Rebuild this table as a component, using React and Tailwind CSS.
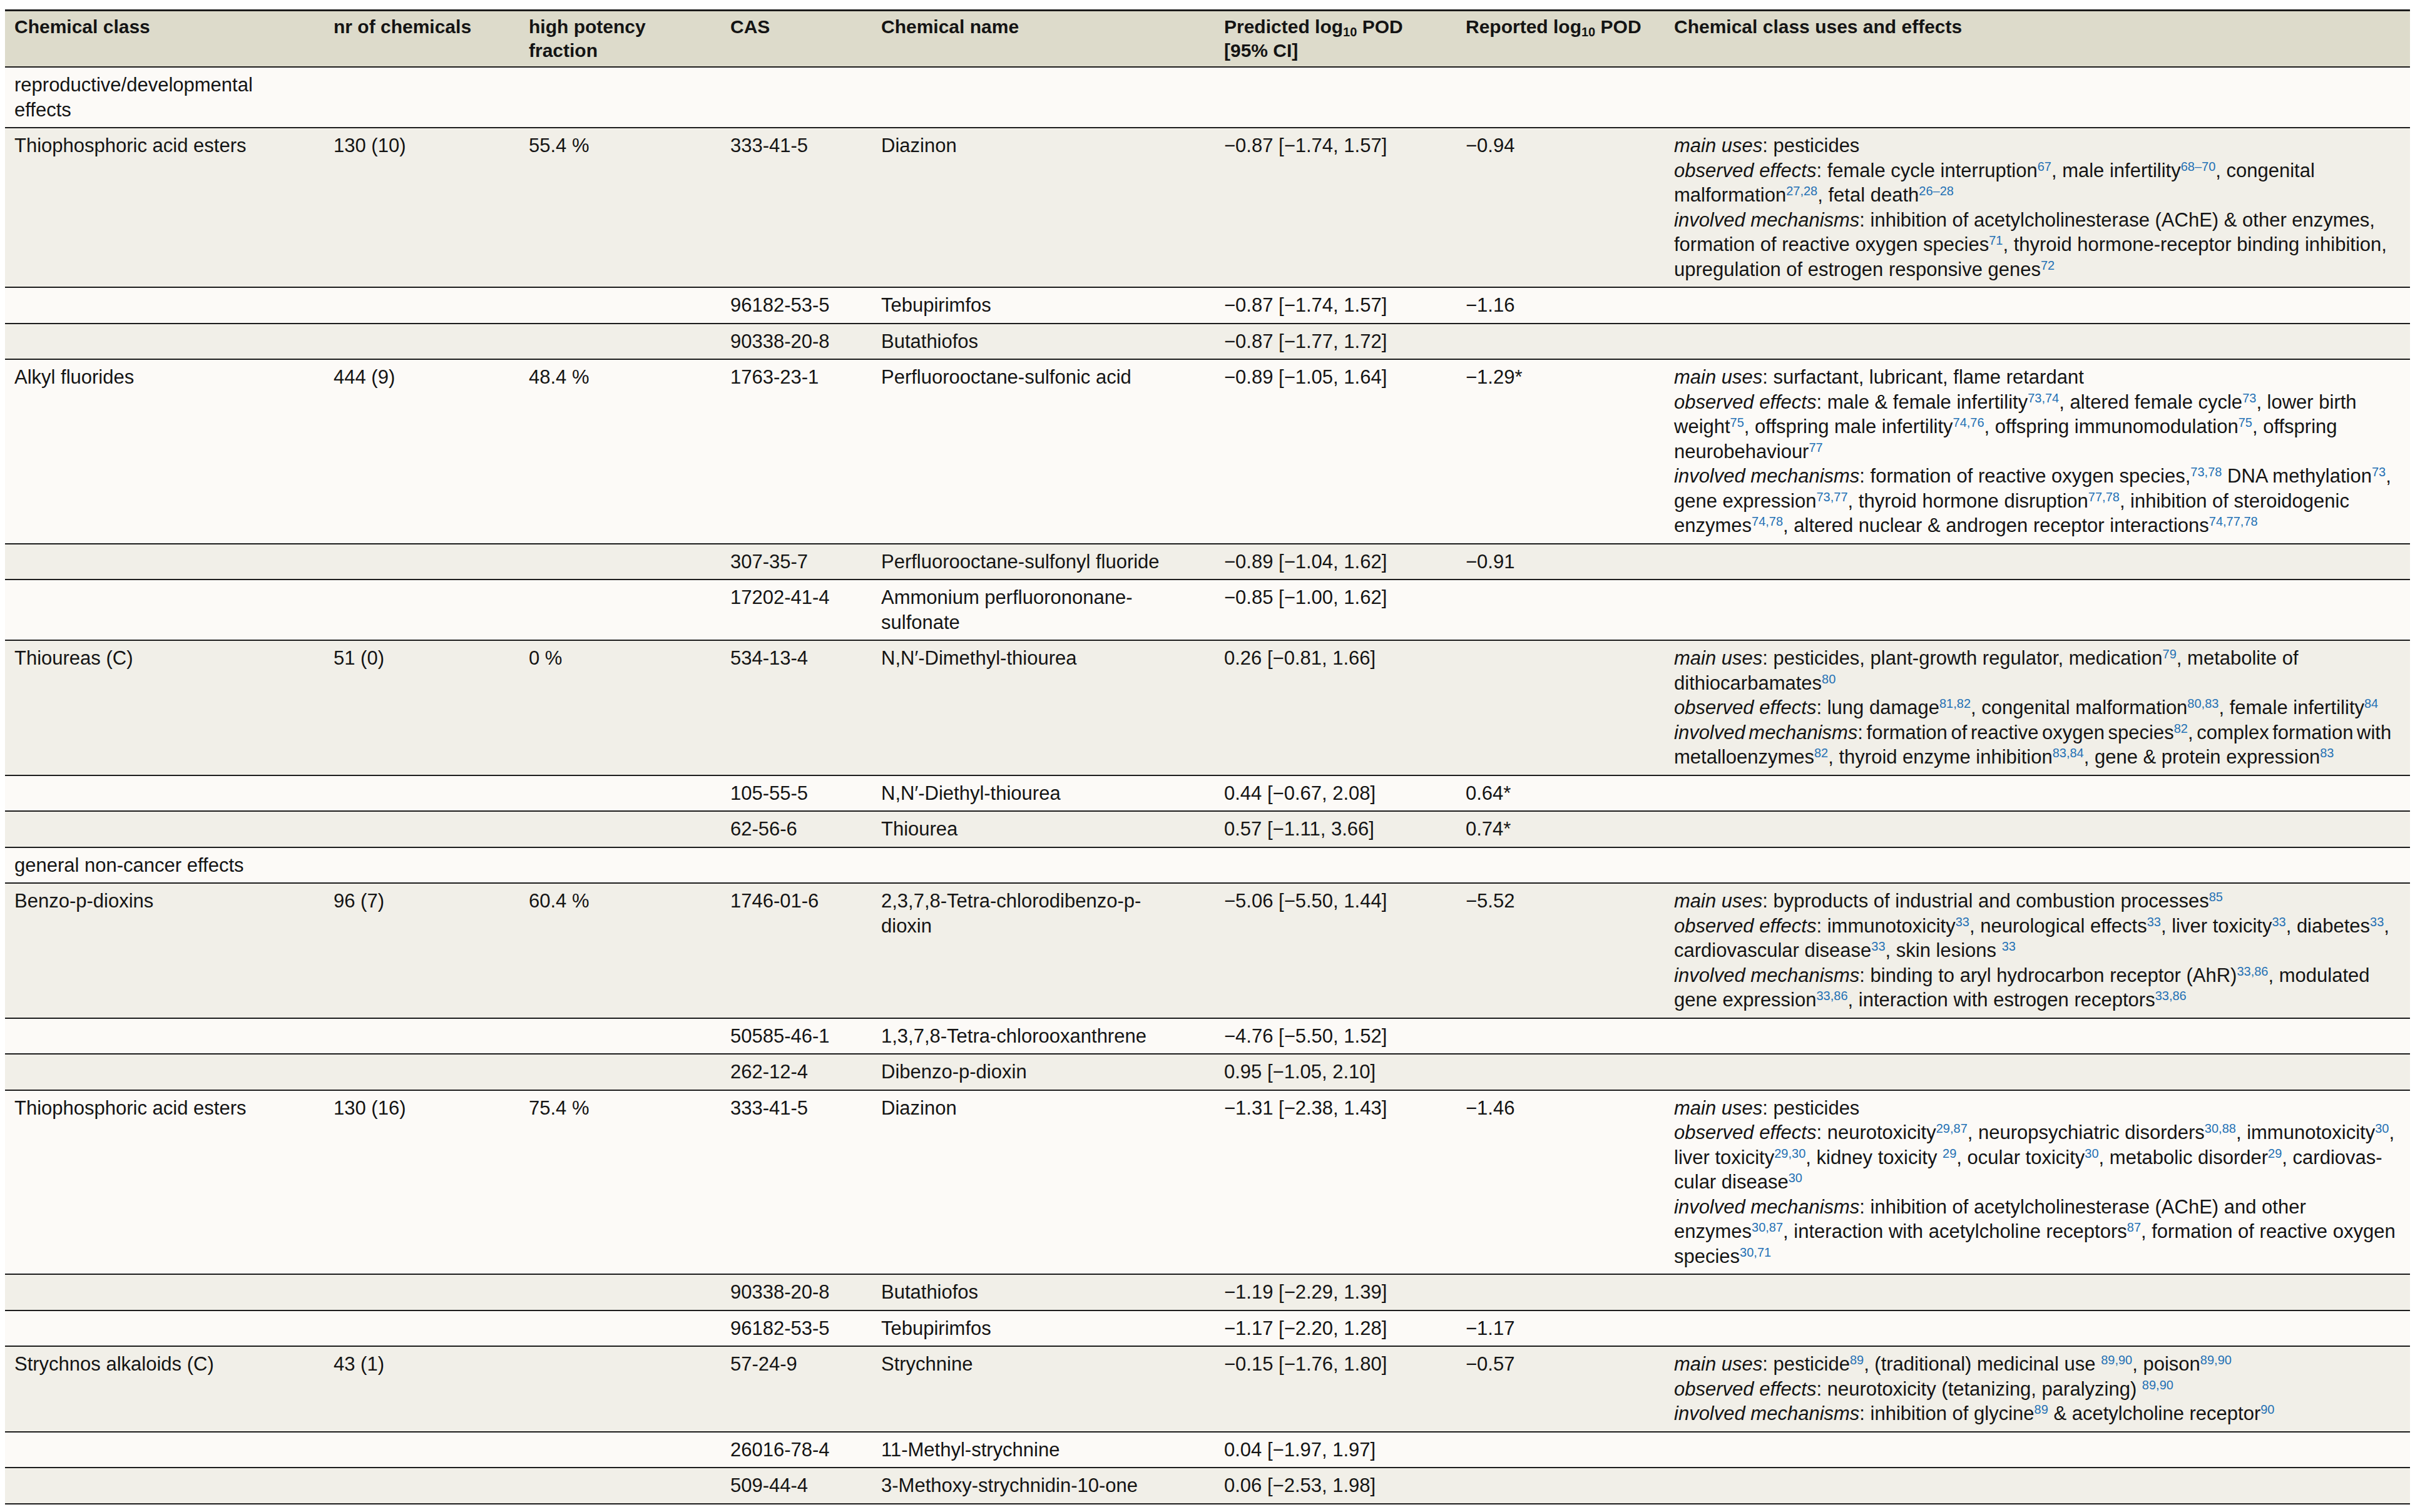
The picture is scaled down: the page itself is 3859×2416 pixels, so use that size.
const grid = 'grid grid-cols-[510px_312px_322px_241px_548px_386px_333px_1fr]';

function S({ children }) {
  return <sup className="text-[20px] text-[#2471b5]">{children}</sup>;
}

function L({ children, className = '' }) {
  return <div className={`whitespace-nowrap ${className}`}>{children}</div>;
}

const I = ({ children }) => <i>{children}</i>;

const effects = {
  diazRepro: (
    <>
      <L><I>main uses</I>: pesticides</L>
      <L><I>observed effects</I>: female cycle interruption<S>67</S>, male infertility<S>68–70</S>, congenital</L>
      <L>malformation<S>27,28</S>, fetal death<S>26–28</S></L>
      <L><I>involved mechanisms</I>: inhibition of acetylcholinesterase (AChE) &amp; other enzymes,</L>
      <L>formation of reactive oxygen species<S>71</S>, thyroid hormone-receptor binding inhibition,</L>
      <L>upregulation of estrogen responsive genes<S>72</S></L>
    </>
  ),
  pfos: (
    <>
      <L><I>main uses</I>: surfactant, lubricant, flame retardant</L>
      <L><I>observed effects</I>: male &amp; female infertility<S>73,74</S>, altered female cycle<S>73</S>, lower birth</L>
      <L>weight<S>75</S>, offspring male infertility<S>74,76</S>, offspring immunomodulation<S>75</S>, offspring</L>
      <L>neurobehaviour<S>77</S></L>
      <L><I>involved mechanisms</I>: formation of reactive oxygen species,<S>73,78</S> DNA methylation<S>73</S>,</L>
      <L>gene expression<S>73,77</S>, thyroid hormone disruption<S>77,78</S>, inhibition of steroidogenic</L>
      <L>enzymes<S>74,78</S>, altered nuclear &amp; androgen receptor interactions<S>74,77,78</S></L>
    </>
  ),
  thiou: (
    <>
      <L><I>main uses</I>: pesticides, plant-growth regulator, medication<S>79</S>, metabolite of</L>
      <L>dithiocarbamates<S>80</S></L>
      <L><I>observed effects</I>: lung damage<S>81,82</S>, congenital malformation<S>80,83</S>, female infertility<S>84</S></L>
      <L className="[word-spacing:-3px]"><I>involved mechanisms</I>: formation of reactive oxygen species<S>82</S>, complex formation with</L>
      <L>metalloenzymes<S>82</S>, thyroid enzyme inhibition<S>83,84</S>, gene &amp; protein expression<S>83</S></L>
    </>
  ),
  benzo: (
    <>
      <L><I>main uses</I>: byproducts of industrial and combustion processes<S>85</S></L>
      <L><I>observed effects</I>: immunotoxicity<S>33</S>, neurological effects<S>33</S>, liver toxicity<S>33</S>, diabetes<S>33</S>,</L>
      <L>cardiovascular disease<S>33</S>, skin lesions <S>33</S></L>
      <L><I>involved mechanisms</I>: binding to aryl hydrocarbon receptor (AhR)<S>33,86</S>, modulated</L>
      <L>gene expression<S>33,86</S>, interaction with estrogen receptors<S>33,86</S></L>
    </>
  ),
  diazGen: (
    <>
      <L><I>main uses</I>: pesticides</L>
      <L><I>observed effects</I>: neurotoxicity<S>29,87</S>, neuropsychiatric disorders<S>30,88</S>, immunotoxicity<S>30</S>,</L>
      <L>liver toxicity<S>29,30</S>, kidney toxicity <S>29</S>, ocular toxicity<S>30</S>, metabolic disorder<S>29</S>, cardiovas-</L>
      <L>cular disease<S>30</S></L>
      <L><I>involved mechanisms</I>: inhibition of acetylcholinesterase (AChE) and other</L>
      <L>enzymes<S>30,87</S>, interaction with acetylcholine receptors<S>87</S>, formation of reactive oxygen</L>
      <L>species<S>30,71</S></L>
    </>
  ),
  strych: (
    <>
      <L><I>main uses</I>: pesticide<S>89</S>, (traditional) medicinal use <S>89,90</S>, poison<S>89,90</S></L>
      <L><I>observed effects</I>: neurotoxicity (tetanizing, paralyzing) <S>89,90</S></L>
      <L><I>involved mechanisms</I>: inhibition of glycine<S>89</S> &amp; acetylcholine receptor<S>90</S></L>
    </>
  ),
};

const rows = [
  { group: <>reproductive/developmental<br />effects</> },
  { c: ['Thiophosphoric acid esters', '130 (10)', '55.4 %', '333-41-5', 'Diazinon', '−0.87 [−1.74, 1.57]', '−0.94'], fx: effects.diazRepro },
  { c: ['', '', '', '96182-53-5', 'Tebupirimfos', '−0.87 [−1.74, 1.57]', '−1.16'] },
  { c: ['', '', '', '90338-20-8', 'Butathiofos', '−0.87 [−1.77, 1.72]', ''] },
  { c: ['Alkyl fluorides', '444 (9)', '48.4 %', '1763-23-1', 'Perfluorooctane-sulfonic acid', '−0.89 [−1.05, 1.64]', '−1.29*'], fx: effects.pfos },
  { c: ['', '', '', '307-35-7', 'Perfluorooctane-sulfonyl fluoride', '−0.89 [−1.04, 1.62]', '−0.91'] },
  { c: ['', '', '', '17202-41-4', <>Ammonium perfluorononane-<br />sulfonate</>, '−0.85 [−1.00, 1.62]', ''] },
  { c: ['Thioureas (C)', '51 (0)', '0 %', '534-13-4', 'N,N′-Dimethyl-thiourea', '0.26 [−0.81, 1.66]', ''], fx: effects.thiou },
  { c: ['', '', '', '105-55-5', 'N,N′-Diethyl-thiourea', '0.44 [−0.67, 2.08]', '0.64*'] },
  { c: ['', '', '', '62-56-6', 'Thiourea', '0.57 [−1.11, 3.66]', '0.74*'] },
  { group: 'general non-cancer effects' },
  { c: ['Benzo-p-dioxins', '96 (7)', '60.4 %', '1746-01-6', <>2,3,7,8-Tetra-chlorodibenzo-p-<br />dioxin</>, '−5.06 [−5.50, 1.44]', '−5.52'], fx: effects.benzo },
  { c: ['', '', '', '50585-46-1', '1,3,7,8-Tetra-chlorooxanthrene', '−4.76 [−5.50, 1.52]', ''] },
  { c: ['', '', '', '262-12-4', 'Dibenzo-p-dioxin', '0.95 [−1.05, 2.10]', ''] },
  { c: ['Thiophosphoric acid esters', '130 (16)', '75.4 %', '333-41-5', 'Diazinon', '−1.31 [−2.38, 1.43]', '−1.46'], fx: effects.diazGen },
  { c: ['', '', '', '90338-20-8', 'Butathiofos', '−1.19 [−2.29, 1.39]', ''] },
  { c: ['', '', '', '96182-53-5', 'Tebupirimfos', '−1.17 [−2.20, 1.28]', '−1.17'] },
  { c: ['Strychnos alkaloids (C)', '43 (1)', '', '57-24-9', 'Strychnine', '−0.15 [−1.76, 1.80]', '−0.57'], fx: effects.strych },
  { c: ['', '', '', '26016-78-4', '11-Methyl-strychnine', '0.04 [−1.97, 1.97]', ''] },
  { c: ['', '', '', '509-44-4', '3-Methoxy-strychnidin-10-one', '0.06 [−2.53, 1.98]', ''] },
];

const headers = [
  'Chemical class',
  'nr of chemicals',
  <>high potency<br />fraction</>,
  'CAS',
  'Chemical name',
  <>Predicted log<sub className="text-[20px]">10</sub> POD<br />[95% CI]</>,
  <>Reported log<sub className="text-[20px]">10</sub> POD</>,
  'Chemical class uses and effects',
];

export default function App() {
  return (
    <div className="min-h-screen bg-white px-2 pt-[15px] pb-2 font-['Liberation_Sans',Arial,sans-serif] text-[#141414]">
      <div className="border-t-[3px] border-[#1c1c1c]">
        {/* Header */}
        <div className={`${grid} bg-[#dddbcb] border-b-2 border-[#1c1c1c] text-[30px] leading-[38px] font-bold`}>
          {headers.map((h, i) => (
            <div key={i} className="px-[15px] py-[6px]">{h}</div>
          ))}
        </div>

        {/* Body */}
        {rows.map((r, i) => (
          <div
            key={i}
            className={`${grid} border-b-2 border-[#1c1c1c] text-[31px] leading-[39.5px] ${
              i % 2 === 0 ? 'bg-[#fcfaf7]' : 'bg-[#f1efe8]'
            }`}
          >
            {r.group ? (
              <div className="px-[15px] py-2">{r.group}</div>
            ) : (
              <>
                {r.c.map((v, j) => (
                  <div key={j} className="px-[15px] py-2 whitespace-nowrap">{v}</div>
                ))}
                <div className="px-[15px] py-2">{r.fx}</div>
              </>
            )}
          </div>
        ))}
      </div>
    </div>
  );
}
